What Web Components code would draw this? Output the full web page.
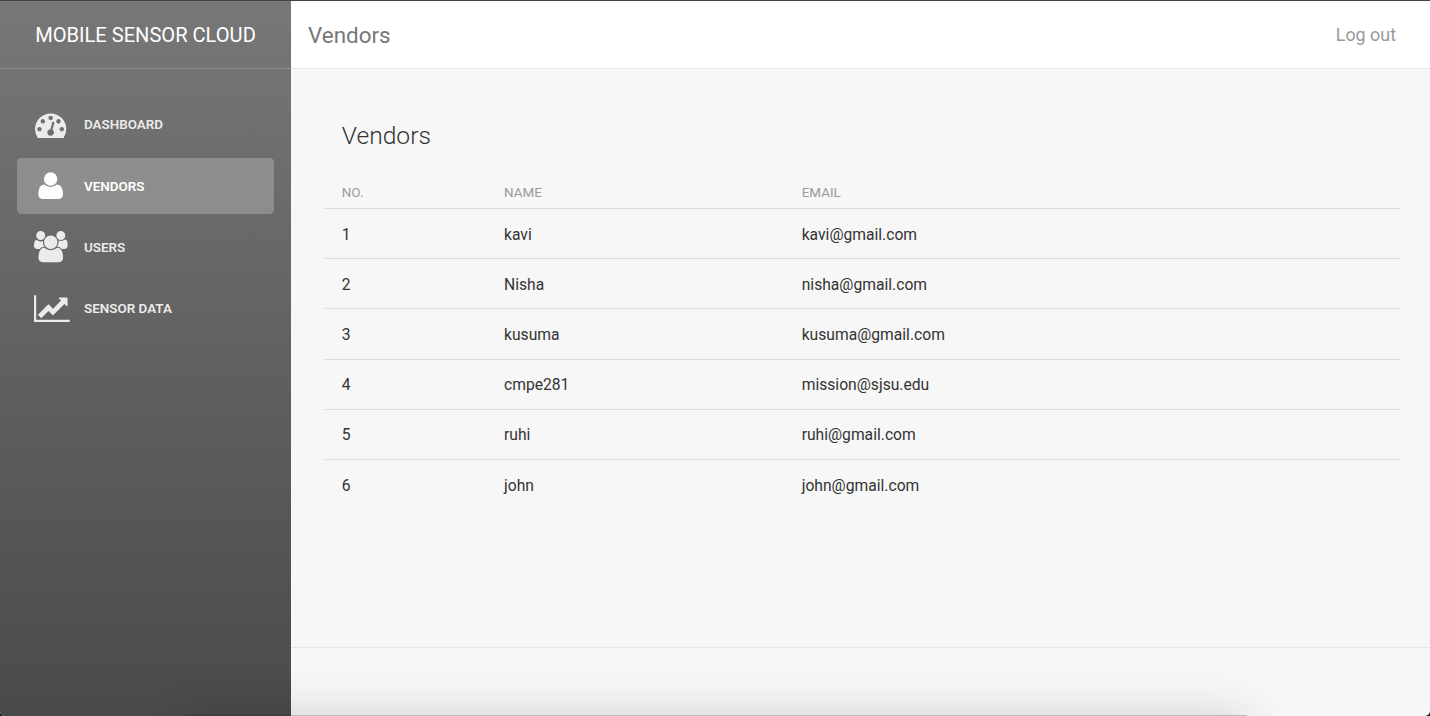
<!DOCTYPE html>
<html lang="en">
<head>
<meta charset="utf-8">
<title>Mobile Sensor Cloud</title>
<style>
html,body{margin:0;height:100%;overflow:hidden;background:#101c28;font-family:Roboto,"Liberation Sans",sans-serif}
</style>
</head>
<body>
<app-shell>
  <side-bar slot="side" brand="MOBILE SENSOR CLOUD">
    <nav-item icon="dashboard">DASHBOARD</nav-item>
    <nav-item icon="user" active>VENDORS</nav-item>
    <nav-item icon="users">USERS</nav-item>
    <nav-item icon="chart">SENSOR DATA</nav-item>
  </side-bar>
  <top-bar slot="top">Vendors<span slot="action">Log out</span></top-bar>
  <data-card>
    <span slot="title">Vendors</span>
    <data-row head><span>NO.</span><span>NAME</span><span>EMAIL</span></data-row>
    <data-row><span>1</span><span>kavi</span><span>kavi@gmail.com</span></data-row>
    <data-row><span>2</span><span>Nisha</span><span>nisha@gmail.com</span></data-row>
    <data-row><span>3</span><span>kusuma</span><span>kusuma@gmail.com</span></data-row>
    <data-row><span>4</span><span>cmpe281</span><span>mission@sjsu.edu</span></data-row>
    <data-row><span>5</span><span>ruhi</span><span>ruhi@gmail.com</span></data-row>
    <data-row><span>6</span><span>john</span><span>john@gmail.com</span></data-row>
  </data-card>
</app-shell>
<script>
const define = (name, html, setup) => {
  const tpl = document.createElement('template');
  tpl.innerHTML = html;
  customElements.define(name, class extends HTMLElement {
    constructor() {
      super();
      this.attachShadow({mode: 'open'}).append(tpl.content.cloneNode(true));
    }
    connectedCallback() { if (setup) setup(this, this.shadowRoot); }
  });
};

const icons = {
  dashboard: ['0 0 1792 1792', 'M384 1152q0-53-37.5-90.5t-90.5-37.5-90.5 37.5-37.5 90.5 37.5 90.5 90.5 37.5 90.5-37.5 37.5-90.5zm192-448q0-53-37.5-90.5t-90.5-37.5-90.5 37.5-37.5 90.5 37.5 90.5 90.5 37.5 90.5-37.5 37.5-90.5zm428 481l101-382q6-26-7.5-48.5t-38.5-29.5-48 6.5-30 39.5l-101 382q-60 5-107 43.5t-63 98.5q-20 77 20 146t117 89 146-20 89-117q16-60-6-117t-72-91zm660-33q0-53-37.5-90.5t-90.5-37.5-90.5 37.5-37.5 90.5 37.5 90.5 90.5 37.5 90.5-37.5 37.5-90.5zm-640-640q0-53-37.5-90.5t-90.5-37.5-90.5 37.5-37.5 90.5 37.5 90.5 90.5 37.5 90.5-37.5 37.5-90.5zm448 192q0-53-37.5-90.5t-90.5-37.5-90.5 37.5-37.5 90.5 37.5 90.5 90.5 37.5 90.5-37.5 37.5-90.5zm320 448q0 261-141 483-19 29-54 29h-1402q-35 0-54-29-141-221-141-483 0-182 71-348t191-286 286-191 348-71 348 71 286 191 191 286 71 348z'],
  user: ['0 0 1792 1792', 'M1600 1405q0 120-73 189.5t-194 69.5h-874q-121 0-194-69.5t-73-189.5q0-53 3.5-103.5t14-109 26.5-108.5 43-97.5 62-81 85.5-53.5 111.5-20q9 0 42 21.5t74.5 48 108 48 133.5 21.5 133.5-21.5 108-48 74.5-48 42-21.5q61 0 111.5 20t85.5 53.5 62 81 43 97.5 26.5 108.5 14 109 3.5 103.5zm-320-893q0 159-112.5 271.5t-271.5 112.5-271.5-112.5-112.5-271.5 112.5-271.5 271.5-112.5 271.5 112.5 112.5 271.5z'],
  users: ['64 0 1920 1792', 'M657 896q-162 5-265 128h-134q-82 0-138-40.5t-56-118.5q0-353 124-353 6 0 43.5 21t97.5 42.5 119 21.5q67 0 133-23-5 37-5 66 0 159 90 287zm1071 637q0 120-73 189.5t-194 69.5h-874q-121 0-194-69.5t-73-189.5q0-53 3.5-103.5t14-109 26.5-108.5 43-97.5 62-81 85.5-53.5 111.5-20q10 0 43 21.5t73 48 107 48 135 21.5 135-21.5 107-48 73-48 43-21.5q61 0 111.5 20t85.5 53.5 62 81 43 97.5 26.5 108.5 14 109 3.5 103.5zm-1024-1277q0 106-75 181t-181 75-181-75-75-181 75-181 181-75 181 75 75 181zm704 384q0 159-112.5 271.5t-271.5 112.5-271.5-112.5-112.5-271.5 112.5-271.5 271.5-112.5 271.5 112.5 112.5 271.5zm576 225q0 78-56 118.5t-138 40.5h-134q-103-123-265-128 90-128 90-287 0-29-5-66 66 23 133 23 59 0 119-21.5t97.5-42.5 43.5-21q124 0 124 353zm-128-609q0 106-75 181t-181 75-181-75-75-181 75-181 181-75 181 75 75 181z'],
  chart: ['0 0 2048 1792', 'M2048 1536v128h-2048v-1536h128v1408h1920zm-128-1248v435q0 21-19.5 29.5t-35.5-7.5l-121-121-633 633q-10 10-23 10t-23-10l-233-233-416 416-192-192 585-585q10-10 23-10t23 10l233 233 464-464-121-121q-16-16-7.5-35.5t29.5-19.5h435q14 0 23 9t9 23z']
};

define('app-shell', `<style>
:host{display:grid;position:relative;box-sizing:border-box;height:100vh;grid-template-columns:291px 1fr;grid-template-rows:68px 1fr 69px;border-top:1px solid #434143;border-radius:0 0 5px 5px;background:#f7f7f7;overflow:hidden}
slot[name=side]::slotted(*){grid-row:1/4}
footer{border-top:1px solid #e7e7e7}
.dock{position:absolute;left:187px;right:183px;top:100%;height:60px;margin-top:-1px;background:#bcbcbc;box-shadow:0 1px 48px rgba(0,0,0,.16)}
.dock i{position:absolute;left:0;top:0;width:104px;height:1px;background:#3d3d3d}
</style><slot name="side"></slot><slot name="top"></slot><slot></slot><footer></footer><div class="dock"><i></i></div>`);

define('side-bar', `<style>
:host{display:flex;flex-direction:column;background:linear-gradient(#777,#727272 12%,#4a4a4a);color:#fff}
header{box-sizing:border-box;height:68px;border-bottom:1px solid #8e8e8e;display:flex;align-items:center;justify-content:center;font-size:20.1px;line-height:30px}
nav{display:flex;flex-direction:column;gap:5.8px;padding:28px 16.6px 0 17px}
</style><header></header><nav><slot></slot></nav>`, (el, root) => {
  root.querySelector('header').textContent = el.getAttribute('brand');
});

define('nav-item', `<style>
:host{display:flex;align-items:center;box-sizing:border-box;height:55.6px;padding-left:16.7px;border-radius:4.5px;font-size:13.43px;font-weight:600;color:#ebebeb}
:host([active]){background:rgba(255,255,255,.23);color:#fff}
.icon{width:33.6px;margin-right:16.7px;margin-bottom:1px;display:flex;justify-content:center}
.icon.wide{justify-content:flex-start}
svg{height:31.3px;flex:none;fill:currentColor;overflow:visible}
</style><span class="icon"><svg><path/></svg></span><slot></slot>`, (el, root) => {
  const name = el.getAttribute('icon'), [box, d] = icons[name];
  const [, , w, h] = box.split(' ').map(Number);
  const svg = root.querySelector('svg');
  svg.setAttribute('viewBox', box);
  svg.style.width = 31.3 * w / h + 'px';
  svg.firstElementChild.setAttribute('d', d);
  if (name === 'chart') root.querySelector('.icon').classList.add('wide');
});

define('top-bar', `<style>
:host{display:flex;align-items:center;justify-content:space-between;box-sizing:border-box;background:#fff;border-bottom:1px solid #e7e7e7;padding:0 34px 0 17px;font-size:22.4px;color:#777}
slot[name=action]::slotted(*){font-size:17.9px;color:#9a9a9a}
</style><div><slot></slot></div><slot name="action"></slot>`);

define('data-card', `<style>
:host{display:block;padding:50px 30px 0 34px;color:#333}
h4{margin:0 0 0 16.8px;font-size:24.6px;line-height:34px;font-weight:300}
.table{margin-top:22px}
</style><h4><slot name="title"></slot></h4><div class="table"><slot></slot></div>`);

define('data-row', `<style>
:host{display:grid;grid-template-columns:162.2px 297.7px 1fr;align-items:center;height:50.2px;padding-top:1.2px;font-size:15.67px;box-sizing:border-box;border-bottom:1px solid #dcdcdc}
:host([head]){height:33.95px;font-size:13.43px;color:#9a9a9a}
:host(:last-of-type){border-bottom-color:transparent}
::slotted(*){padding-left:16.8px}
</style><slot></slot>`);
</script>
</body>
</html>
